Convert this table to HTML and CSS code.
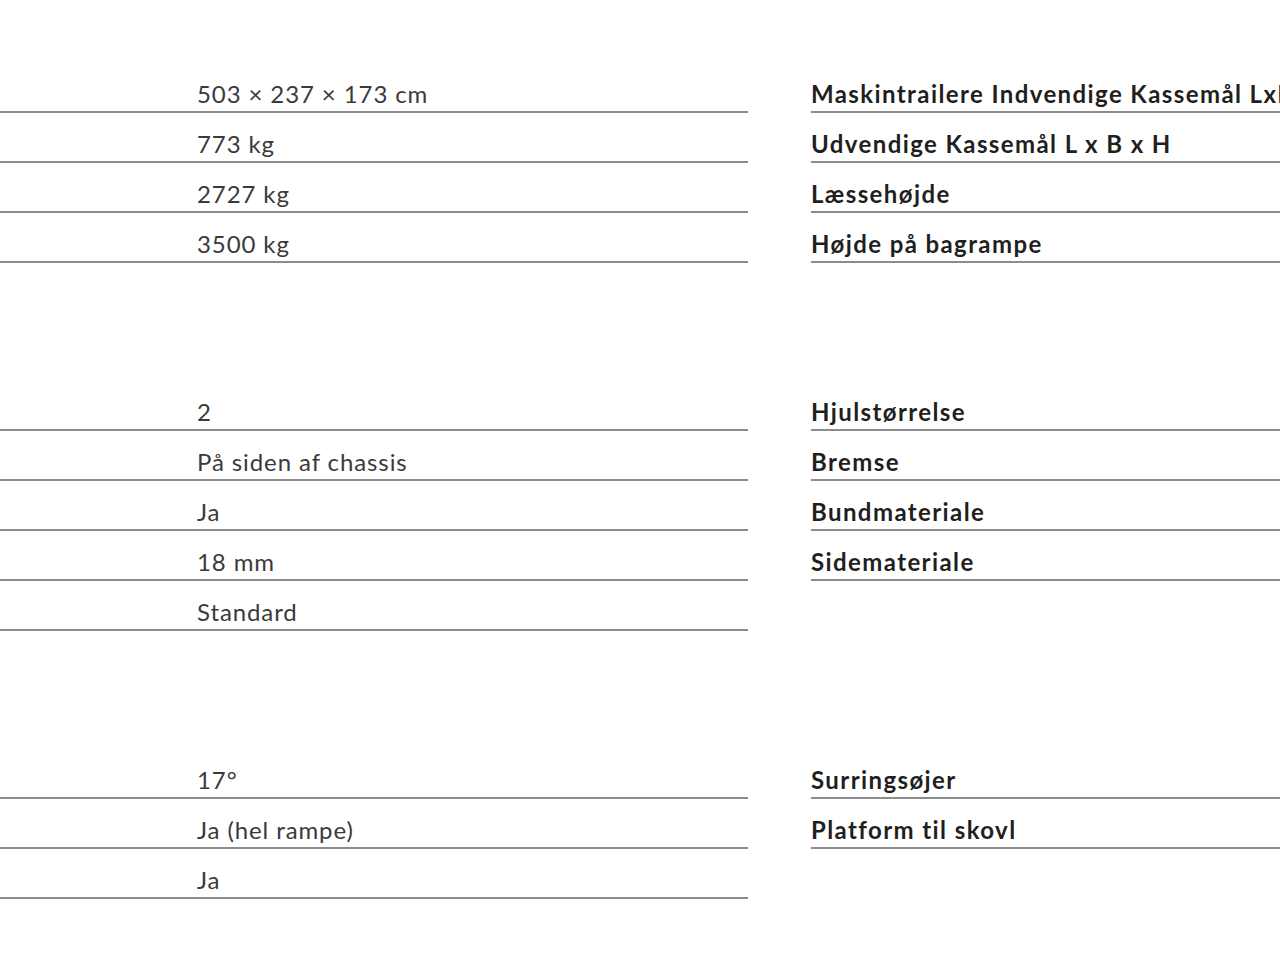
FILE: index.html
```html
<!DOCTYPE html>
<html lang="da">
<head>
<meta charset="utf-8">
<title>Specifikationer</title>
<link rel="stylesheet" href="styles.css">
</head>
<body>
<div class="page">
  <section class="group">
    <div class="col col-left">
      <div class="row">503 × 237 × 173 cm</div>
      <div class="row">773 kg</div>
      <div class="row">2727 kg</div>
      <div class="row">3500 kg</div>
    </div>
    <div class="col col-right">
      <div class="row">Maskintrailere Indvendige Kassemål LxBxH</div>
      <div class="row">Udvendige Kassemål L x B x H</div>
      <div class="row">Læssehøjde</div>
      <div class="row">Højde på bagrampe</div>
    </div>
  </section>
  <section class="group">
    <div class="col col-left">
      <div class="row">2</div>
      <div class="row">På siden af chassis</div>
      <div class="row">Ja</div>
      <div class="row">18 mm</div>
      <div class="row">Standard</div>
    </div>
    <div class="col col-right">
      <div class="row">Hjulstørrelse</div>
      <div class="row">Bremse</div>
      <div class="row">Bundmateriale</div>
      <div class="row">Sidemateriale</div>
    </div>
  </section>
  <section class="group">
    <div class="col col-left">
      <div class="row">17°</div>
      <div class="row">Ja (hel rampe)</div>
      <div class="row">Ja</div>
    </div>
    <div class="col col-right">
      <div class="row">Surringsøjer</div>
      <div class="row">Platform til skovl</div>
    </div>
  </section>
</div>
</body>
</html>
```

FILE: styles.css
```css
html, body {
  margin: 0;
  padding: 0;
  background: #ffffff;
}
body {
  overflow: hidden;
  width: 1280px;
  height: 960px;
  font-family: "Lato", "Noto Sans", sans-serif;
}
.page {
  display: flex;
  flex-direction: column;
  gap: 118px;
  padding-top: 63px;
}
.group {
  display: grid;
  grid-template-columns: 748px 469px;
  column-gap: 63px;
  align-items: start;
  overflow: hidden;
}
.col {
  display: flex;
  flex-direction: column;
  min-width: 0;
}
.row {
  height: 45px;
  padding-bottom: 3px;
  box-sizing: content-box;
  border-bottom: 2px solid #8c8c8c;
  font-size: 24px;
  line-height: 28px;
  display: flex;
  align-items: flex-end;
  white-space: nowrap;
  overflow: hidden;
}
.col-left .row {
  padding-left: 197px;
  color: #3a3a3a;
  font-weight: 400;
  letter-spacing: 0.9px;
}
.col-right .row {
  color: #1f1f1f;
  font-weight: 700;
  letter-spacing: 1.4px;
}
```
